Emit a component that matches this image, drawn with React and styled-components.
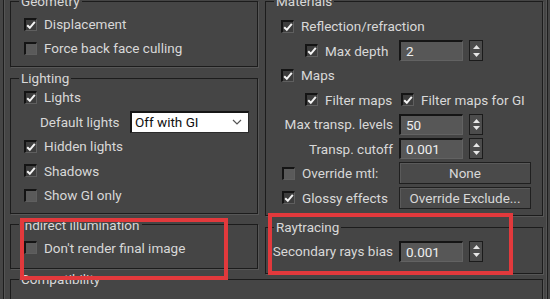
import React from 'react';
import styled, { createGlobalStyle } from 'styled-components';

const GlobalStyle = createGlobalStyle`
  html, body {
    margin: 0;
    padding: 0;
    background: #454545;
    overflow: hidden;
  }
  body {
    font-family: Roboto, "Liberation Sans", sans-serif;
  }
`;

const Page = styled.div`
  position: relative;
  width: 550px;
  height: 299px;
  overflow: hidden;
  background: #454545;
  color: #d8d8d8;
  font-size: 13.5px;
`;

const Rollout = styled.div`
  box-sizing: border-box;
  width: 545px;
  margin: -6px 0 0 3px;
  padding: 0 4px 0 6px;
  border-left: 1px solid #1d1d1d;
  border-right: 1px solid #1d1d1d;
  box-shadow: inset 1px 0 0 #555, inset -1px 0 0 #555;
`;

const Columns = styled.div`
  display: grid;
  grid-template-columns: 248px 278px;
  column-gap: 7px;
  align-items: start;
`;

const Column = styled.div`
  display: flex;
  flex-direction: column;
  gap: 4px;
`;

const Group = styled.fieldset`
  margin: ${p => p.$mt || 0}px 0 0;
  padding: ${p => p.$pt}px 0 ${p => p.$pb}px;
  min-width: 0;
  border: 1px solid #1c1c1c;
  box-shadow: 1px 1px 0 #575757;
`;

const Legend = styled.legend`
  margin-left: 8px;
  padding: 0 2px;
  line-height: 14px;
  font-size: 13.5px;
  color: #d8d8d8;
  white-space: nowrap;
`;

const CheckRow = styled.div`
  display: flex;
  align-items: center;
  gap: 7px;
  height: ${p => p.$h || 24}px;
  padding-left: ${p => p.$indent}px;
  white-space: nowrap;
`;

const LabelRow = styled.div`
  display: flex;
  align-items: center;
  justify-content: space-between;
  height: ${p => p.$h || 24}px;
  padding: 0 8px 0 ${p => p.$indent}px;
  white-space: nowrap;
`;

const FieldRow = styled.div`
  display: grid;
  grid-template-columns: ${p => p.$cols};
  column-gap: 6px;
  align-items: center;
  height: ${p => p.$h || 24}px;
  padding-left: ${p => p.$indent}px;
  white-space: nowrap;
`;

const Label = styled.span`
  justify-self: ${p => (p.$end ? 'end' : 'start')};
  display: flex;
  align-items: center;
  gap: 7px;
  padding-left: ${p => p.$indent || 0}px;
`;

const Box = styled.span`
  box-sizing: border-box;
  flex: none;
  width: 13px;
  height: 13px;
  margin-left: ${p => p.$shift || 0}px;
  border-top: 2px solid #141414;
  border-left: 2px solid #141414;
  border-right: 1px solid #5f5f5f;
  border-bottom: 1px solid #5f5f5f;
  background: ${p => (p.$on ? '#3d3d3d' : '#5a5a5a')};
  display: flex;
  align-items: center;
  justify-content: center;
`;

const Field = styled.div`
  box-sizing: border-box;
  height: 21px;
  width: 64px;
  padding: 0 5px;
  display: flex;
  align-items: center;
  border-top: 2px solid #151515;
  border-left: 2px solid #151515;
  border-right: 1px solid #626262;
  border-bottom: 1px solid #626262;
  background: #575757;
  color: #eeeeee;
`;

const Spin = styled.div`
  box-sizing: border-box;
  width: 14px;
  height: 21px;
  border: 1px solid #1b1b1b;
  background: #4c4c4c;
  display: flex;
  flex-direction: column;
  align-items: center;
  justify-content: space-around;
  padding: 2px 0;
`;

const Select = styled.div`
  box-sizing: border-box;
  width: 119px;
  height: 22px;
  padding: 0 6px 0 3px;
  display: flex;
  align-items: center;
  justify-content: space-between;
  border-top: 2px solid #161616;
  border-left: 2px solid #161616;
  border-right: 1px solid #2c2c2c;
  border-bottom: 1px solid #2c2c2c;
  background: #ffffff;
  color: #111111;
`;

const Button = styled.div`
  box-sizing: border-box;
  height: 22px;
  display: flex;
  align-items: center;
  justify-content: center;
  border: 1px solid #1f1f1f;
  box-shadow: inset 1px 1px 0 #5a5a5a;
  background: #4a4a4a;
  color: #d8d8d8;
`;

const Annotation = styled.div`
  position: absolute;
  left: ${p => p.$x}px;
  top: ${p => p.$y}px;
  width: ${p => p.$w}px;
  height: ${p => p.$h}px;
  box-sizing: border-box;
  border: 4px solid #e2393c;
  pointer-events: none;
`;

function Check({ on, shift }) {
  return (
    <Box $on={on} $shift={shift}>
      {on && (
        <svg width="10" height="10" viewBox="0 0 10 10">
          <polyline points="1.2,5.2 3.8,7.8 8.8,1.8" fill="none" stroke="#f4f4f4" strokeWidth="2" />
        </svg>
      )}
    </Box>
  );
}

function Spinner() {
  return (
    <Spin>
      <svg width="7" height="4" viewBox="0 0 7 4">
        <polygon points="0,4 3.5,0 7,4" fill="#e6e6e6" />
      </svg>
      <svg width="7" height="4" viewBox="0 0 7 4">
        <polygon points="0,0 3.5,4 7,0" fill="#e6e6e6" />
      </svg>
    </Spin>
  );
}

function Chevron() {
  return (
    <svg width="10" height="6" viewBox="0 0 10 6">
      <polyline points="1,1 5,5 9,1" fill="none" stroke="#555" strokeWidth="1.2" />
    </svg>
  );
}

const spinCols = '111px 64px 14px';

export default function App() {
  return (
    <Page>
      <GlobalStyle />
      <Rollout>
        <Columns>
          <Column>
            <Group $pt={4} $pb={6}>
              <Legend>Geometry</Legend>
              <CheckRow $indent={13}>
                <Check on />
                Displacement
              </CheckRow>
              <CheckRow $indent={13}>
                <Check />
                Force back face culling
              </CheckRow>
            </Group>

            <Group $pt={0} $pb={5}>
              <Legend>Lighting</Legend>
              <CheckRow $indent={13} $h={24.5}>
                <Check on />
                Lights
              </CheckRow>
              <LabelRow $indent={29} $h={24.5}>
                Default lights
                <Select>
                  Off with GI
                  <Chevron />
                </Select>
              </LabelRow>
              <CheckRow $indent={13} $h={24.5}>
                <Check on />
                Hidden lights
              </CheckRow>
              <CheckRow $indent={13} $h={24.5}>
                <Check on />
                Shadows
              </CheckRow>
              <CheckRow $indent={13} $h={24.5}>
                <Check />
                Show GI only
              </CheckRow>
            </Group>

            <Group $pt={4} $pb={8}>
              <Legend>Indirect illumination</Legend>
              <CheckRow $indent={13}>
                <Check />
                Don't render final image
              </CheckRow>
            </Group>
          </Column>

          <Column>
            <Group $pt={6} $pb={5}>
              <Legend>Materials</Legend>
              <CheckRow $indent={15} $h={24.5}>
                <Check on />
                Reflection/refraction
              </CheckRow>
              <FieldRow $indent={16} $cols={spinCols} $h={24.5}>
                <Label $indent={23}>
                  <Check on />
                  Max depth
                </Label>
                <Field>2</Field>
                <Spinner />
              </FieldRow>
              <CheckRow $indent={15} $h={24.5}>
                <Check on />
                Maps
              </CheckRow>
              <FieldRow $indent={16} $cols="111px auto" $h={24.5}>
                <Label $indent={23}>
                  <Check on />
                  Filter maps
                </Label>
                <Label>
                  <Check on shift={2} />
                  Filter maps for GI
                </Label>
              </FieldRow>
              <FieldRow $indent={16} $cols={spinCols} $h={24.5}>
                <Label $end>Max transp. levels</Label>
                <Field>50</Field>
                <Spinner />
              </FieldRow>
              <FieldRow $indent={16} $cols={spinCols} $h={24.5}>
                <Label $end>Transp. cutoff</Label>
                <Field>0.001</Field>
                <Spinner />
              </FieldRow>
              <FieldRow $indent={16} $cols="111px 132px" $h={24.5}>
                <Label>
                  <Check />
                  Override mtl:
                </Label>
                <Button>None</Button>
              </FieldRow>
              <FieldRow $indent={16} $cols="111px 132px" $h={24.5}>
                <Label>
                  <Check on />
                  Glossy effects
                </Label>
                <Button>Override Exclude...</Button>
              </FieldRow>
            </Group>

            <Group $pt={5} $pb={10}>
              <Legend>Raytracing</Legend>
              <FieldRow $indent={6} $cols={'121px 64px 14px'}>
                <Label $end>Secondary rays bias</Label>
                <Field>0.001</Field>
                <Spinner />
              </FieldRow>
            </Group>
          </Column>
        </Columns>

        <Group $mt={-2} $pt={0} $pb={30}>
          <Legend>Compatibility</Legend>
        </Group>
      </Rollout>

      <Annotation $x={20} $y={218} $w={208} $h={62} />
      <Annotation $x={268} $y={213} $w={245} $h={62} />
    </Page>
  );
}
